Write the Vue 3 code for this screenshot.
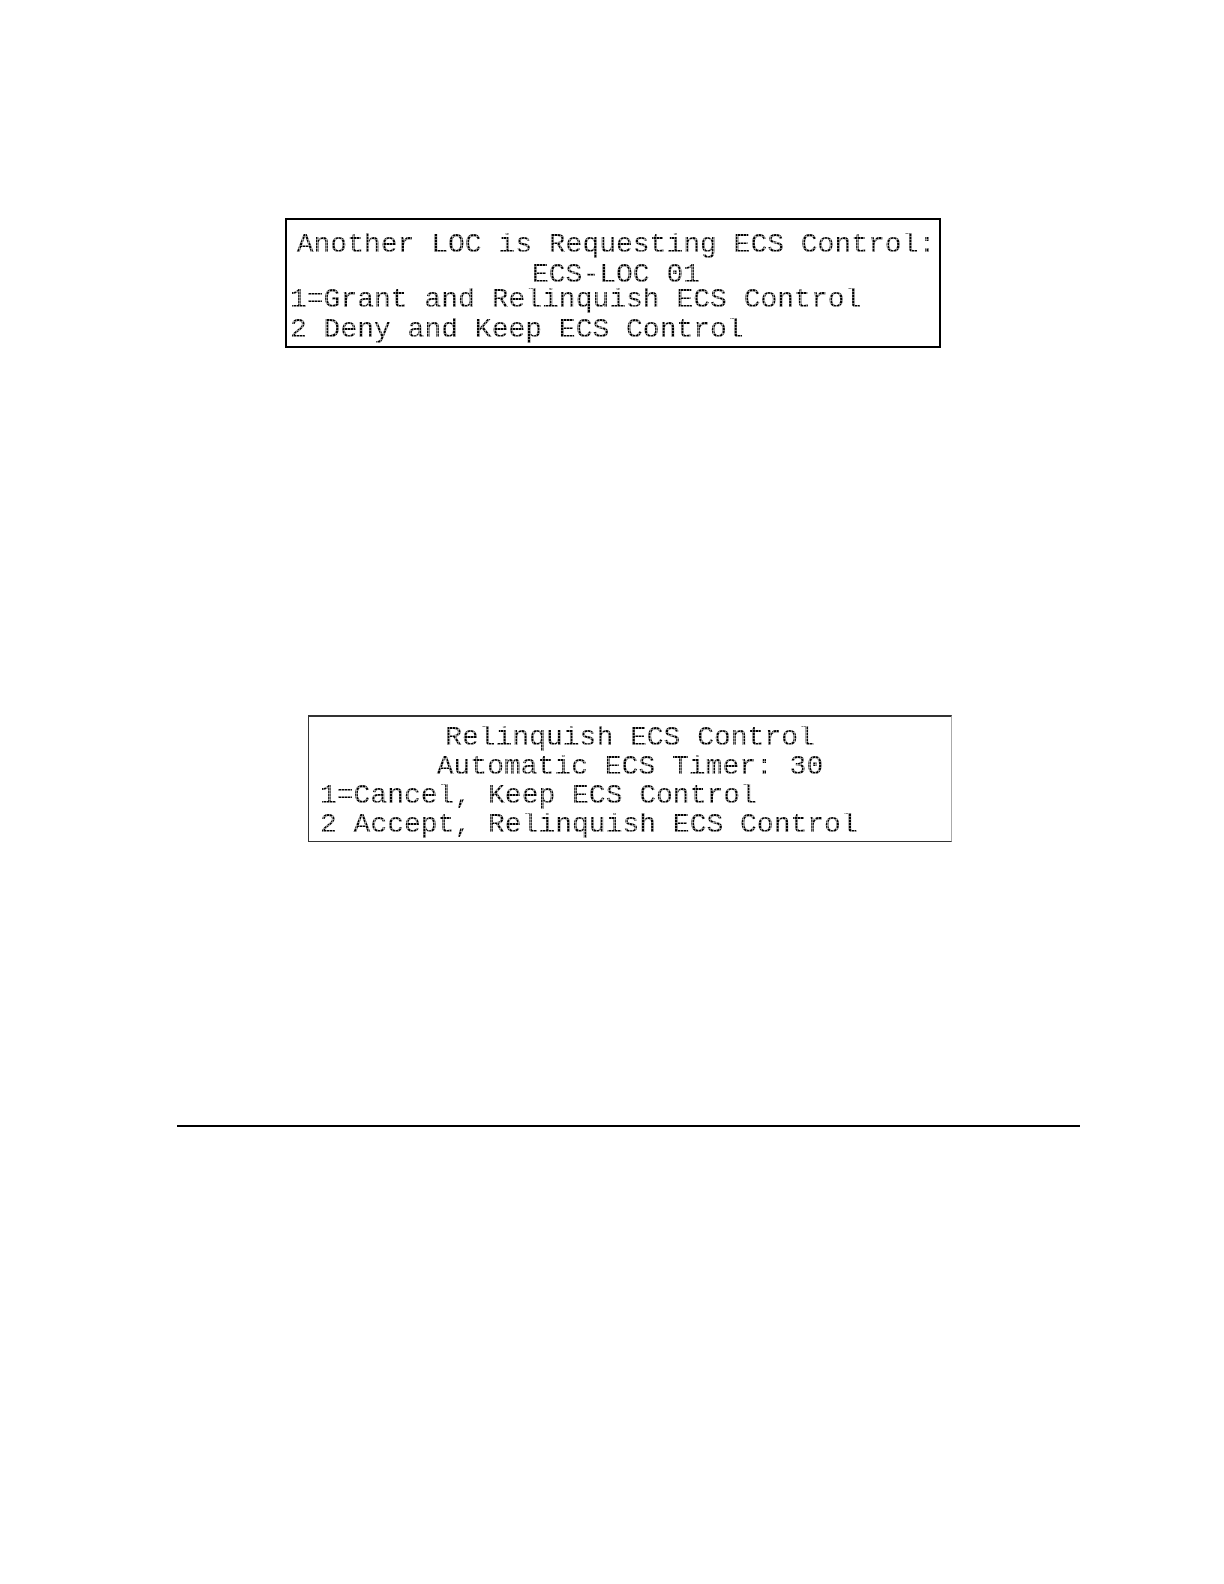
<template>
    <main class="page">
        <section
            v-for="screen in screens"
            :key="screen.name"
            class="lcd"
            :class="screen.name"
        >
            <div class="header">
                <p v-for="line in screen.header" :key="line" class="line">{{ line }}</p>
            </div>
            <div class="options">
                <p v-for="line in screen.options" :key="line" class="line">{{ line }}</p>
            </div>
        </section>
        <hr class="rule">
    </main>
</template>

<script setup>
// LCD screens, four lines each
const screens = [
    {
        name: 'request',
        header: ['Another LOC is Requesting ECS Control:', 'ECS-LOC 01'],
        options: ['1=Grant and Relinquish ECS Control', '2 Deny and Keep ECS Control']
    },
    {
        name: 'relinquish',
        header: ['Relinquish ECS Control', 'Automatic ECS Timer: 30'],
        options: ['1=Cancel, Keep ECS Control', '2 Accept, Relinquish ECS Control']
    }
]
</script>

<style>
body {
    margin: 0;
    background: #fff;
}
</style>

<style scoped>
.page {
    display: flex;
    flex-direction: column;
    padding: 218px 144px 456px 177px;
}

.lcd {
    box-sizing: border-box;
    font-family: "Liberation Mono", monospace;
    font-size: 28px;
    line-height: 23px;
}

.header,
.options {
    display: flex;
    flex-direction: column;
}

.line {
    margin: 0;
    padding-bottom: 2px;
    white-space: pre;
    color: transparent;
    /* dot matrix: solid dots with a faint grid between them */
    background-image:
        linear-gradient(90deg, rgba(255, 255, 255, 0.5) 1px, transparent 1px),
        linear-gradient(rgba(255, 255, 255, 0.5) 1px, transparent 1px),
        linear-gradient(#000, #000);
    background-size: 3px 3px, 3px 3px, auto;
    background-clip: text;
}

.header {
    text-align: center;
}

.request {
    margin: 0 139px 0 108px;
    padding: 13px 3px 3px;
    border: 2px solid #000;
}

.request .header,
.request .options {
    gap: 5px;
}

.request .header {
    padding-left: 6px;
}

.relinquish {
    display: flex;
    flex-direction: column;
    gap: 4px;
    margin: 367px 128px 0 131px;
    padding: 9px 11px 3px;
    border: 1px solid #333;
    border-top-width: 2px;
    border-right-color: #aaa;
}

.relinquish .header,
.relinquish .options {
    gap: 4px;
}

.rule {
    width: 100%;
    margin: 283px 0 0;
    border: 0;
    border-top: 2px solid #000;
}
</style>
